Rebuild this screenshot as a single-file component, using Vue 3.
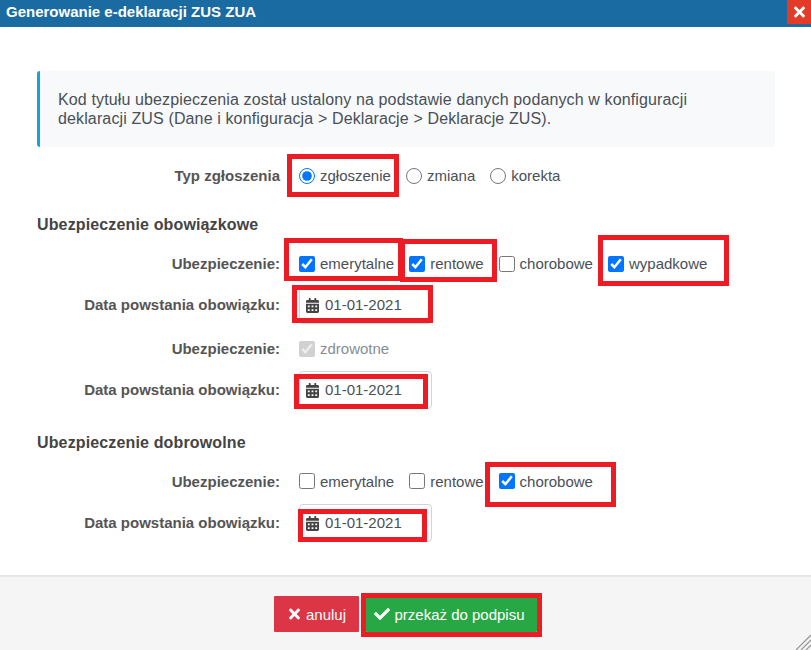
<template>
  <div class="dialog">
    <header class="titlebar">
      <span class="title">Generowanie e-deklaracji ZUS ZUA</span>
      <button class="close-btn">
        <svg viewBox="0 0 352 512" class="close-icon"><path :d="timesPath" /></svg>
      </button>
    </header>

    <main class="content">
      <div class="alert">
        Kod tytułu ubezpieczenia został ustalony na podstawie danych podanych w konfiguracji
        deklaracji ZUS (Dane i konfiguracja &gt; Deklaracje &gt; Deklaracje ZUS).
      </div>

      <div class="row row-type">
        <label class="row-label">Typ zgłoszenia</label>
        <div class="row-controls">
          <label class="opt"><input type="radio" name="typ" checked /><span>zgłoszenie</span></label>
          <label class="opt"><input type="radio" name="typ" /><span>zmiana</span></label>
          <label class="opt"><input type="radio" name="typ" /><span>korekta</span></label>
        </div>
      </div>

      <h3 class="section section-first">Ubezpieczenie obowiązkowe</h3>

      <div class="row row-check">
        <label class="row-label">Ubezpieczenie:</label>
        <div class="row-controls">
          <label v-for="o in mandatory" :key="o.name" class="opt"><input type="checkbox" :checked="o.on" /><span>{{ o.name }}</span></label>
        </div>
      </div>
      <div class="row row-date">
        <label class="row-label">Data powstania obowiązku:</label>
        <div class="date-field">
          <svg viewBox="0 0 448 512" class="cal"><path :d="calendarPath" /></svg>
          <span>01-01-2021</span>
        </div>
      </div>

      <div class="row row-check row-health">
        <label class="row-label">Ubezpieczenie:</label>
        <div class="row-controls">
          <label class="opt opt-disabled"><input type="checkbox" checked disabled /><span>zdrowotne</span></label>
        </div>
      </div>
      <div class="row row-date">
        <label class="row-label">Data powstania obowiązku:</label>
        <div class="date-field">
          <svg viewBox="0 0 448 512" class="cal"><path :d="calendarPath" /></svg>
          <span>01-01-2021</span>
        </div>
      </div>

      <h3 class="section section-second">Ubezpieczenie dobrowolne</h3>

      <div class="row row-check row-voluntary">
        <label class="row-label">Ubezpieczenie:</label>
        <div class="row-controls">
          <label v-for="o in voluntary" :key="o.name" class="opt"><input type="checkbox" :checked="o.on" /><span>{{ o.name }}</span></label>
        </div>
      </div>
      <div class="row row-date">
        <label class="row-label">Data powstania obowiązku:</label>
        <div class="date-field">
          <svg viewBox="0 0 448 512" class="cal"><path :d="calendarPath" /></svg>
          <span>01-01-2021</span>
        </div>
      </div>
    </main>

    <footer class="footer">
      <button class="btn btn-cancel">
        <svg viewBox="0 0 352 512" class="btn-icon-x"><path :d="timesPath" /></svg>
        anuluj
      </button>
      <button class="btn btn-ok">
        <svg viewBox="0 0 512 512" class="btn-icon-check"><path :d="checkPath" /></svg>
        przekaż do podpisu
      </button>
      <svg class="grip" viewBox="0 0 16 16">
        <path d="M16 1 L1 16 M16 6 L6 16 M16 11 L11 16" stroke="#9a9a9a" stroke-width="1.3" fill="none" />
      </svg>
    </footer>

    <div
      v-for="(m, i) in marks"
      :key="i"
      class="mark"
      :style="{ left: m[0] + 'px', top: m[1] + 'px', width: m[2] + 'px', height: m[3] + 'px' }"
    ></div>
  </div>
</template>

<script setup>
const mandatory = [
  { name: 'emerytalne', on: true },
  { name: 'rentowe', on: true },
  { name: 'chorobowe', on: false },
  { name: 'wypadkowe', on: true }
]
const voluntary = [
  { name: 'emerytalne', on: false },
  { name: 'rentowe', on: false },
  { name: 'chorobowe', on: true }
]

// red annotation frames: x, y, w, h
const marks = [
  [287, 154, 112, 43],
  [284, 238, 119, 43],
  [400, 239, 97, 43],
  [598, 235, 131, 51],
  [292, 285, 141, 38],
  [294, 374, 134, 35],
  [485, 462, 131, 45],
  [298, 509, 129, 33],
  [361, 593, 181, 44]
]

const timesPath = 'M242.72 256l100.07-100.07c12.28-12.28 12.28-32.19 0-44.48l-22.24-22.24c-12.28-12.28-32.19-12.28-44.48 0L176 189.28 75.93 89.21c-12.28-12.28-32.19-12.28-44.48 0L9.21 111.45c-12.28 12.28-12.28 32.19 0 44.48L109.28 256 9.21 356.07c-12.28 12.28-12.28 32.19 0 44.48l22.24 22.24c12.28 12.28 32.2 12.28 44.48 0L176 322.72l100.07 100.07c12.28 12.28 32.2 12.28 44.48 0l22.24-22.24c12.28-12.28 12.28-32.19 0-44.48L242.72 256z'
const checkPath = 'M173.898 439.404l-166.4-166.4c-9.997-9.997-9.997-26.206 0-36.204l36.203-36.204c9.997-9.998 26.207-9.998 36.204 0L192 312.69 432.095 72.596c9.997-9.997 26.207-9.997 36.204 0l36.203 36.204c9.997 9.997 9.997 26.206 0 36.204l-294.4 294.401c-9.998 9.997-26.207 9.997-36.204-.001z'
const calendarPath = 'M0 464c0 26.5 21.5 48 48 48h352c26.5 0 48-21.5 48-48V192H0v272zm320-196c0-6.6 5.4-12 12-12h40c6.6 0 12 5.4 12 12v40c0 6.6-5.4 12-12 12h-40c-6.6 0-12-5.4-12-12v-40zm0 128c0-6.6 5.4-12 12-12h40c6.6 0 12 5.4 12 12v40c0 6.6-5.4 12-12 12h-40c-6.6 0-12-5.4-12-12v-40zM192 268c0-6.6 5.4-12 12-12h40c6.6 0 12 5.4 12 12v40c0 6.6-5.4 12-12 12h-40c-6.6 0-12-5.4-12-12v-40zm0 128c0-6.6 5.4-12 12-12h40c6.6 0 12 5.4 12 12v40c0 6.6-5.4 12-12 12h-40c-6.6 0-12-5.4-12-12v-40zM64 268c0-6.6 5.4-12 12-12h40c6.6 0 12 5.4 12 12v40c0 6.6-5.4 12-12 12H76c-6.6 0-12-5.4-12-12v-40zm0 128c0-6.6 5.4-12 12-12h40c6.6 0 12 5.4 12 12v40c0 6.6-5.4 12-12 12H76c-6.6 0-12-5.4-12-12v-40zM400 64h-48V16c0-8.8-7.2-16-16-16h-32c-8.8 0-16 7.2-16 16v48H160V16c0-8.8-7.2-16-16-16h-32c-8.8 0-16 7.2-16 16v48H48C21.5 64 0 85.5 0 112v48h448v-48c0-26.5-21.5-48-48-48z'
</script>

<style scoped>
.dialog {
  position: relative;
  width: 811px;
  height: 650px;
  display: flex;
  flex-direction: column;
  background: #fff;
  font-family: "Liberation Sans", Arial, sans-serif;
  font-size: 15px;
  color: #495057;
  overflow: hidden;
}

.titlebar {
  height: 27px;
  flex: none;
  display: flex;
  justify-content: space-between;
  align-items: flex-start;
  background: #1a6ba1;
  color: #fff;
}

.title {
  font-weight: bold;
  font-size: 15px;
  line-height: 24px;
  padding-left: 6px;
}

.close-btn {
  width: 24px;
  height: 24px;
  padding: 0;
  border: 0;
  background: #e33b27;
  display: flex;
  align-items: center;
  justify-content: center;
}

.close-icon {
  width: 11px;
  height: 16px;
  fill: #fff;
}

.content {
  flex: 1;
  padding: 44px 36px 0 37px;
}

.alert {
  height: 76px;
  box-sizing: border-box;
  padding: 19px 40px 0 18px;
  border-left: 3px solid #17a2d8;
  border-radius: 3px;
  background: #f8f9fa;
  font-size: 16px;
  letter-spacing: 0.13px;
  line-height: 19px;
}

.row {
  display: flex;
  align-items: center;
  gap: 19px;
}

.row-label {
  width: 243px;
  flex: none;
  padding-bottom: 2px;
  text-align: right;
  font-weight: bold;
  color: #555;
}

.row-controls {
  display: flex;
  align-items: center;
}

.row-type {
  margin-top: 14px;
  height: 30px;
}

.row-check {
  height: 24px;
}

.row-date {
  margin-top: 17px;
  height: 24px;
}

.row-health {
  margin-top: 20px;
}

.section {
  margin: 0;
  font-size: 16px;
  letter-spacing: 0.14px;
  line-height: 20px;
  font-weight: bold;
  color: #444;
}

.section-first {
  margin-top: 24px;
  margin-bottom: 17px;
}

.section-second {
  margin-top: 31px;
  margin-bottom: 17px;
}

.opt {
  display: flex;
  align-items: center;
  margin-right: 15px;
}

.opt input {
  width: 16px;
  height: 16px;
  margin: 0 5px 0 0;
  flex: none;
}

.opt span {
  padding-bottom: 2px;
}

.row-voluntary .opt input {
  margin-bottom: 2px;
}

.opt-disabled {
  color: #868e96;
}

.date-field {
  width: 133px;
  height: 38px;
  box-sizing: border-box;
  flex: none;
  display: flex;
  align-items: center;
  gap: 6px;
  padding-left: 6px;
  border: 1px solid #ced4da;
  border-radius: 4px;
  background: #fff;
}

.date-field span {
  padding-bottom: 2px;
}

.cal {
  width: 13px;
  height: 15px;
  fill: #444;
}

.footer {
  position: relative;
  height: 75px;
  box-sizing: border-box;
  flex: none;
  border-top: 2px solid #e5e5e5;
  background: #f5f5f5;
  display: flex;
  justify-content: center;
  align-items: flex-start;
  gap: 7px;
  padding: 19px 0 0;
}

.btn {
  height: 36px;
  border: 0;
  color: #fff;
  font-family: inherit;
  font-size: 15px;
  display: flex;
  align-items: center;
  justify-content: center;
  gap: 4px;
  padding: 0;
  border-radius: 1px;
}

.btn-cancel {
  width: 85px;
  gap: 6px;
  padding-left: 2px;
  background: #dc3545;
}

.btn-ok {
  width: 171px;
  padding-right: 4px;
  background: #28a745;
}

.btn-icon-x {
  width: 11px;
  height: 16px;
  fill: #fff;
}

.btn-icon-check {
  width: 16px;
  height: 16px;
  fill: #fff;
}

.grip {
  position: absolute;
  right: 0;
  bottom: 0;
  width: 16px;
  height: 16px;
}

.mark {
  position: absolute;
  box-sizing: border-box;
  border: 5px solid #ed1c24;
  pointer-events: none;
}
</style>

<style>
html, body {
  margin: 0;
  background: #fff;
}
</style>
